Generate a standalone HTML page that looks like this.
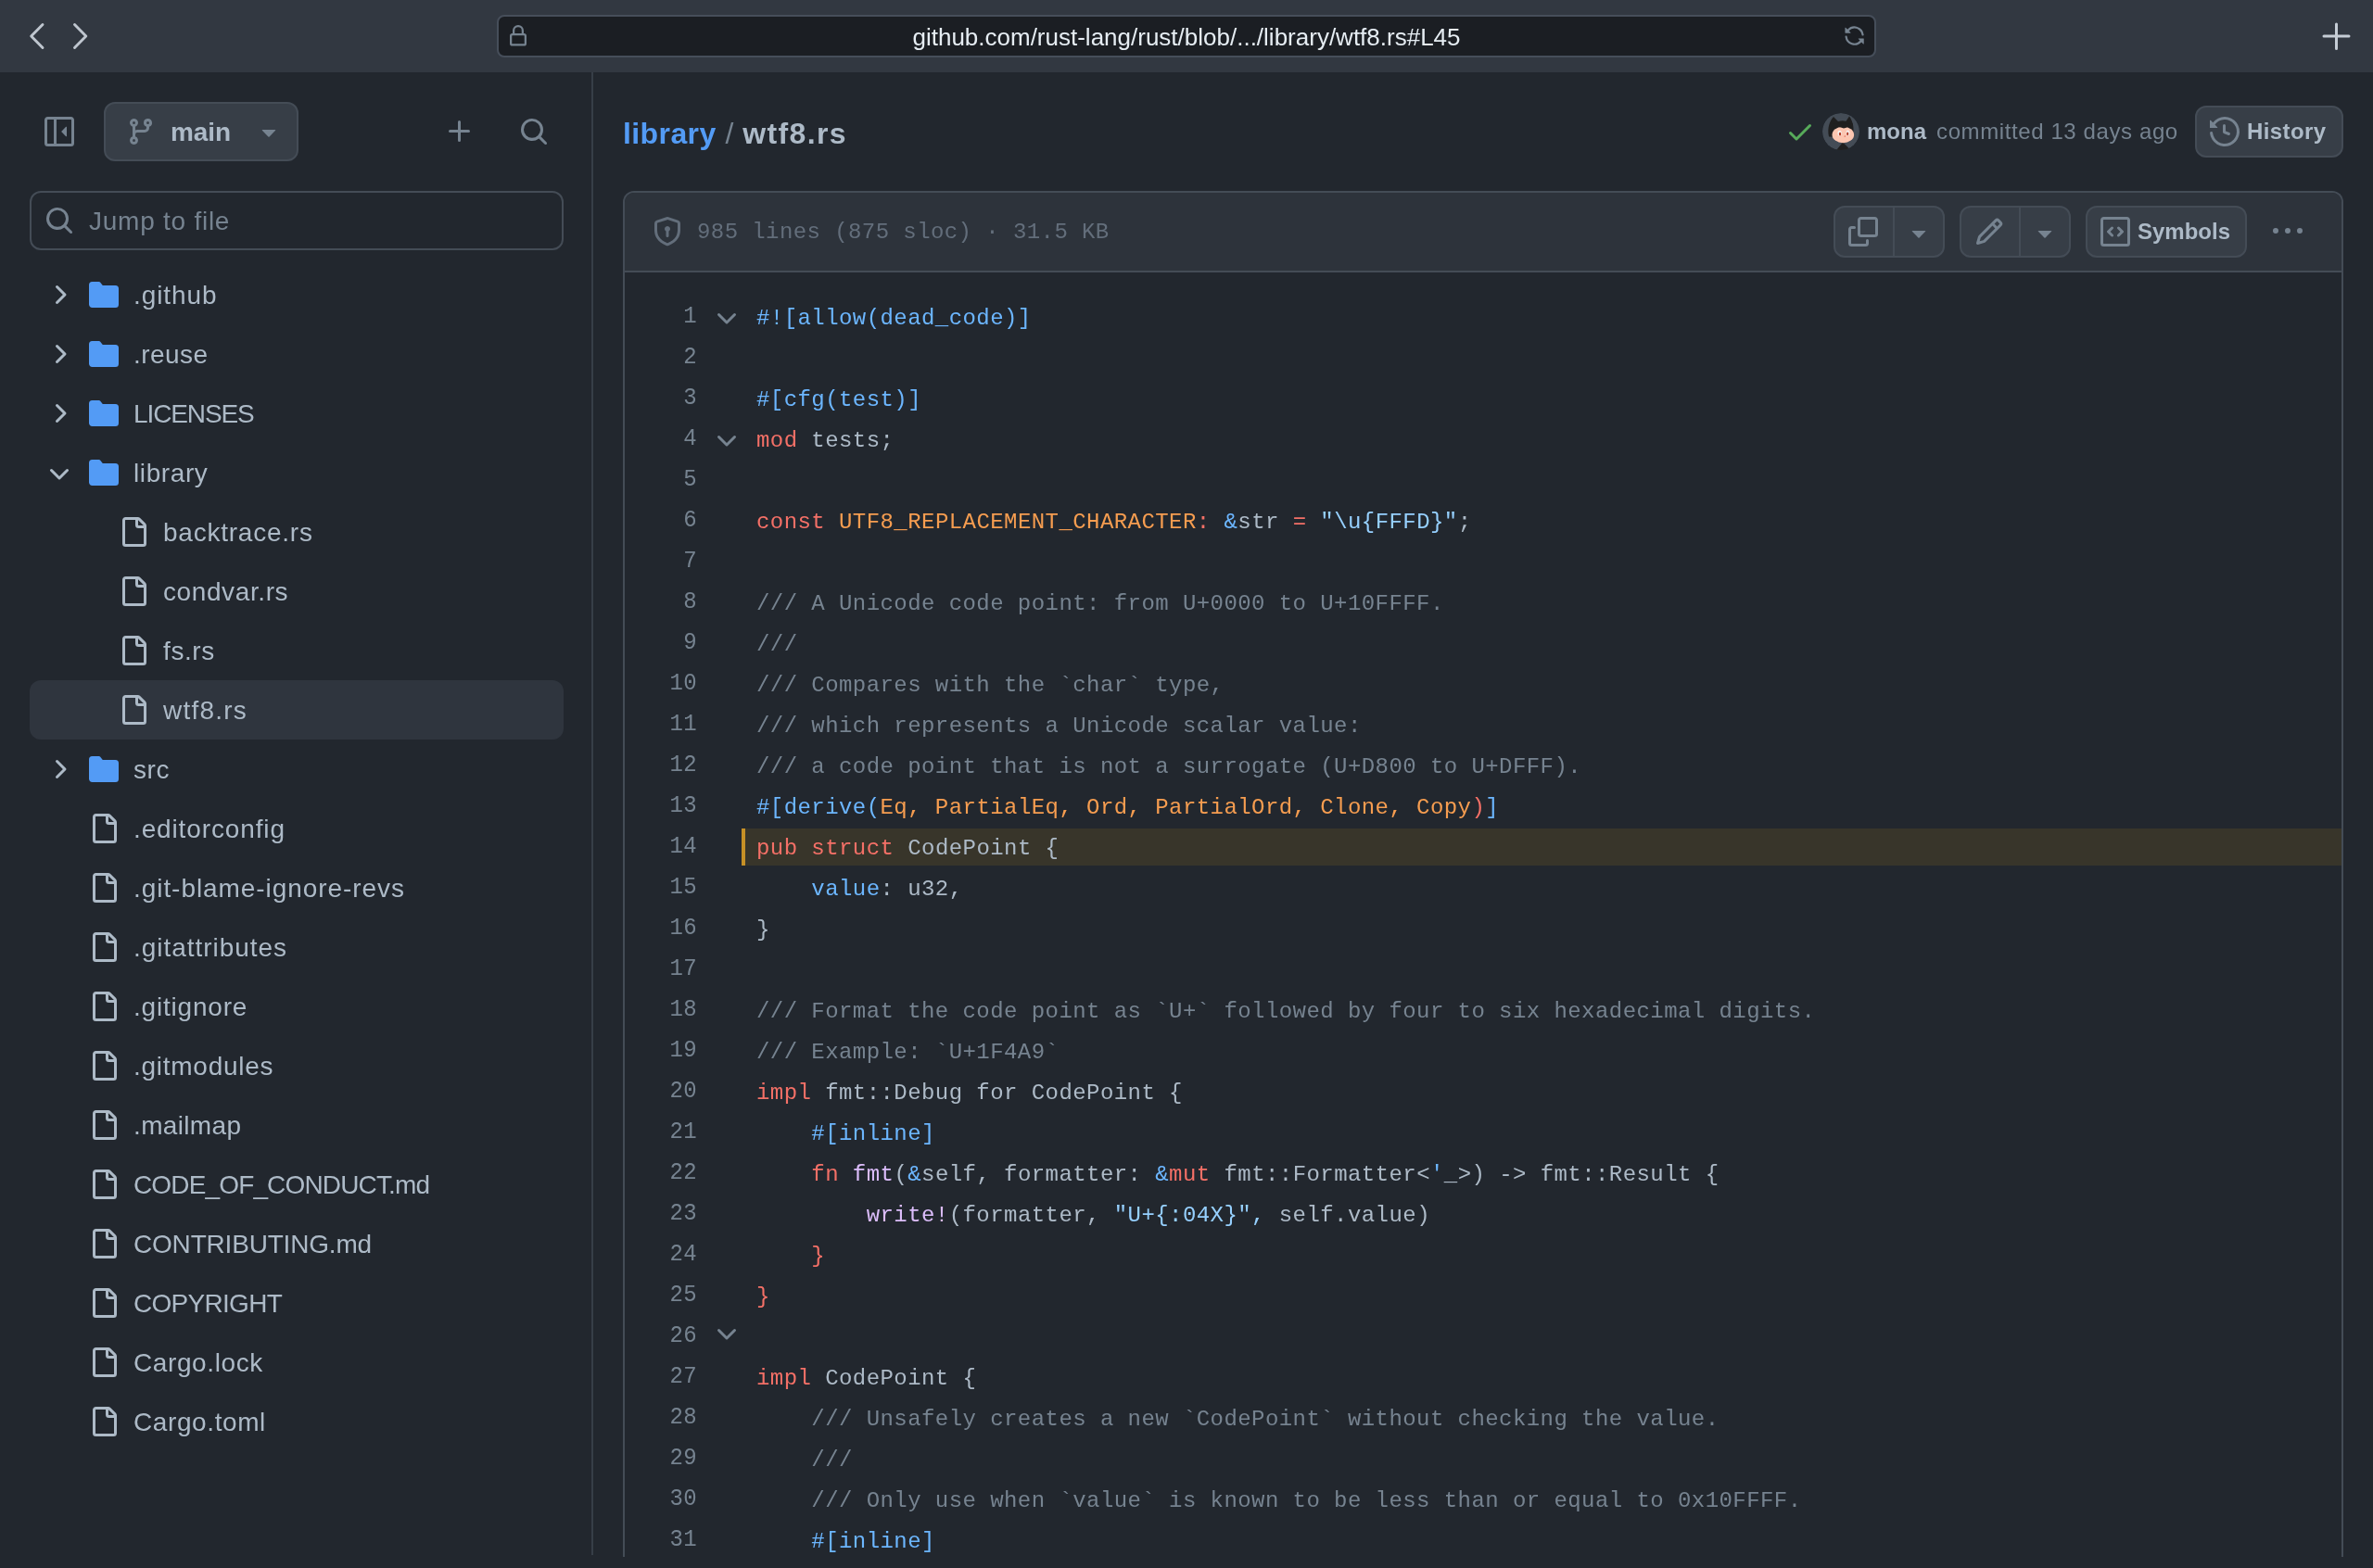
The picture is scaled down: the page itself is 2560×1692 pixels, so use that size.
<!DOCTYPE html>
<html lang="en"><head><meta charset="utf-8"><title>rust/library/wtf8.rs at main · rust-lang/rust</title>
<style>
*{box-sizing:border-box}
html,body{margin:0;padding:0}
body{width:2560px;height:1692px;overflow:hidden;background:#22272e;color:#adbac7;
 font-family:"Liberation Sans",Arial,sans-serif;position:relative}
.ic{position:absolute;display:block;overflow:visible}
.abs{position:absolute;white-space:pre}
#chrome{position:absolute;left:0;top:0;width:2560px;height:78px;background:#323841}
#url{position:absolute;left:536px;top:16px;width:1488px;height:46px;background:#1b1e23;border:2px solid #464e5a;border-radius:8px}
#urltext{left:536px;top:17.3px;width:1488px;height:46px;line-height:46px;text-align:center;font-size:26px;color:#e6edf3}
#sidediv{position:absolute;left:638px;top:78px;width:2px;height:1600px;background:#373e47}
.btn{position:absolute;background:#373e47;border:2px solid #444c56;border-radius:12px}
.t28{font-size:28px;line-height:64px;height:64px;margin-top:1px}
.row{position:absolute;left:32px;width:576px;height:64px}
#sel{position:absolute;left:32px;top:734px;width:576px;height:64px;border-radius:12px;background:#2f353e}
#jump{position:absolute;left:32px;top:206px;width:576px;height:64px;border:2px solid #444c56;border-radius:12px;background:#22272e}
#box{position:absolute;left:672px;top:206px;width:1856px;height:1474px;border:2px solid #444c56;border-bottom:0;border-radius:12px 12px 0 0;overflow:hidden;background:#22272e}
#boxhead{position:absolute;left:0;top:0;width:1852px;height:86px;background:#2d333b;border-bottom:2px solid #444c56}
.mono{font-family:"Liberation Mono","DejaVu Sans Mono",monospace}
.ln{position:absolute;left:660px;margin-top:-.4px;transform:scaleY(1.055);width:92px;text-align:right;color:#768390;font-size:24px;height:44px;line-height:44px;letter-spacing:.4px;white-space:pre}
.cl{position:absolute;left:816px;color:#adbac7;font-size:24px;height:44px;line-height:44px;letter-spacing:.433px;white-space:pre;margin-top:2px}
.k{color:#f47067}.c{color:#6cb6ff}.s{color:#96d0ff}.m{color:#768390}.e{color:#dcbdfb}.v{color:#f69d50}
#hl{position:absolute;left:800px;top:894px;width:1726px;height:40px;background:#38352a;border-left:4px solid #c69026}
#wrap{position:absolute;left:0;top:0;width:2560px;height:1692px;will-change:transform}
</style></head><body><div id="wrap">

<div id="chrome"></div>
<div id="url"></div>
<div id="urltext" class="abs">github.com/rust-lang/rust/blob/.../library/wtf8.rs#L45</div>
<svg class="ic" style="left:24px;top:19px" width="80" height="40" viewBox="0 0 80 40" fill="none" stroke="#bfc6cf" stroke-width="2.9" stroke-linecap="round" stroke-linejoin="round"><path d="M22 7.5 L9.7 20 L22 32.5"/><path d="M56.5 7.5 L68.8 20 L56.5 32.5"/></svg>
<svg class="ic" style="left:547.2px;top:27px" width="24" height="24" viewBox="0 0 16 16" fill="#768390" ><path d="M4 4a4 4 0 0 1 8 0v2h.25c.966 0 1.75.784 1.75 1.75v5.5A1.75 1.75 0 0 1 12.25 15h-8.5A1.75 1.75 0 0 1 2 13.25v-5.5C2 6.784 2.784 6 3.75 6H4Zm8.25 3.5h-8.5a.25.25 0 0 0-.25.25v5.5c0 .138.112.25.25.25h8.5a.25.25 0 0 0 .25-.25v-5.5a.25.25 0 0 0-.25-.25ZM10.5 6V4a2.5 2.5 0 1 0-5 0v2Z"/></svg>
<svg class="ic" style="left:1989.3px;top:27.4px" width="23.2" height="23.2" viewBox="0 0 16 16" fill="#768390" ><path d="M1.705 8.005a.75.75 0 0 1 .834.656 5.5 5.5 0 0 0 9.592 2.97l-1.204-1.204a.25.25 0 0 1 .177-.427h3.646a.25.25 0 0 1 .25.25v3.646a.25.25 0 0 1-.427.177l-1.38-1.38A7.002 7.002 0 0 1 1.05 8.84a.75.75 0 0 1 .656-.834ZM8 2.5a5.487 5.487 0 0 0-4.131 1.869l1.204 1.204A.25.25 0 0 1 4.896 6H1.25A.25.25 0 0 1 1 5.75V2.104a.25.25 0 0 1 .427-.177l1.38 1.38A7.002 7.002 0 0 1 14.95 7.16a.75.75 0 0 1-1.49.178A5.5 5.5 0 0 0 8 2.5Z"/></svg>
<svg class="ic" style="left:2504px;top:23px" width="32" height="32" viewBox="0 0 32 32" fill="none" stroke="#c5ccd5" stroke-width="3" stroke-linecap="round"><path d="M16.5 3V29.5M3 16H30"/></svg>
<div id="sidediv"></div>
<svg class="ic" style="left:48px;top:126px" width="32" height="32" viewBox="0 0 16 16" fill="#768390"><path d="M9.177 7.823a.25.25 0 0 0 0 .354l2.396 2.396A.25.25 0 0 0 12 10.396V5.604a.25.25 0 0 0-.427-.177Z"/><path d="M1.75 0h12.5C15.216 0 16 .784 16 1.75v12.5A1.75 1.75 0 0 1 14.25 16H1.75A1.75 1.75 0 0 1 0 14.25V1.75C0 .784.784 0 1.75 0ZM1.5 1.75v12.5c0 .138.112.25.25.25H5v-13H1.75a.25.25 0 0 0-.25.25ZM6.5 14.5h7.75a.25.25 0 0 0 .25-.25V1.75a.25.25 0 0 0-.25-.25H6.5Z"/></svg>
<div class="btn" style="left:112px;top:110px;width:210px;height:64px"></div>
<svg class="ic" style="left:136px;top:126px" width="32" height="32" viewBox="0 0 16 16" fill="#768390" ><path d="M9.5 3.25a2.25 2.25 0 1 1 3 2.122V6A2.5 2.5 0 0 1 10 8.5H6a1 1 0 0 0-1 1v1.128a2.251 2.251 0 1 1-1.5 0V5.372a2.25 2.25 0 1 1 1.5 0v1.836A2.493 2.493 0 0 1 6 7h4a1 1 0 0 0 1-1v-.628A2.25 2.25 0 0 1 9.5 3.25Zm-6 0a.75.75 0 1 0 1.5 0 .75.75 0 0 0-1.5 0Zm8.25-.75a.75.75 0 1 0 0 1.5.75.75 0 0 0 0-1.5ZM4.25 12a.75.75 0 1 0 0 1.5.75.75 0 0 0 0-1.5Z"/></svg>
<div class="abs" style="left:184px;top:111px;height:64px;line-height:64px;font-size:28px;font-weight:700;color:#adbac7;letter-spacing:-.1px">main</div>
<svg class="ic" style="left:274px;top:126px" width="32" height="32" viewBox="0 0 16 16" fill="#768390" ><path d="m4.427 7.427 3.396 3.396a.25.25 0 0 0 .354 0l3.396-3.396A.25.25 0 0 0 11.396 7H4.604a.25.25 0 0 0-.177.427Z"/></svg>
<svg class="ic" style="left:480px;top:126px" width="32" height="32" viewBox="0 0 16 16" fill="#768390" ><path d="M7.75 2a.75.75 0 0 1 .75.75V7h4.25a.75.75 0 0 1 0 1.5H8.5v4.25a.75.75 0 0 1-1.5 0V8.5H2.75a.75.75 0 0 1 0-1.5H7V2.75A.75.75 0 0 1 7.75 2Z"/></svg>
<svg class="ic" style="left:560px;top:126px" width="32" height="32" viewBox="0 0 16 16" fill="#768390" ><path d="M10.68 11.74a6 6 0 0 1-7.922-8.982 6 6 0 0 1 8.982 7.922l3.04 3.04a.749.749 0 0 1-.326 1.275.749.749 0 0 1-.734-.215ZM11.5 7a4.499 4.499 0 1 0-8.997 0A4.499 4.499 0 0 0 11.5 7Z"/></svg>
<div id="jump"></div>
<svg class="ic" style="left:48px;top:222px" width="32" height="32" viewBox="0 0 16 16" fill="#768390" ><path d="M10.68 11.74a6 6 0 0 1-7.922-8.982 6 6 0 0 1 8.982 7.922l3.04 3.04a.749.749 0 0 1-.326 1.275.749.749 0 0 1-.734-.215ZM11.5 7a4.499 4.499 0 1 0-8.997 0A4.499 4.499 0 0 0 11.5 7Z"/></svg>
<div class="abs t28" style="left:96px;top:206px;color:#768390;letter-spacing:.75px">Jump to file</div>
<div id="sel"></div>
<svg class="ic" style="left:48px;top:302px" width="32" height="32" viewBox="0 0 16 16" fill="#adbac7" ><path d="M6.22 3.22a.75.75 0 0 1 1.06 0l4.25 4.25a.75.75 0 0 1 0 1.06l-4.25 4.25a.751.751 0 0 1-1.042-.018.751.751 0 0 1-.018-1.042L9.94 8 6.22 4.28a.75.75 0 0 1 0-1.06Z"/></svg>
<svg class="ic" style="left:96px;top:302px" width="32" height="32" viewBox="0 0 16 16" fill="#539bf5" ><path d="M1.75 1A1.75 1.75 0 0 0 0 2.75v10.5C0 14.216.784 15 1.75 15h12.5A1.75 1.75 0 0 0 16 13.25v-8.5A1.75 1.75 0 0 0 14.25 3H7.5a.25.25 0 0 1-.2-.1l-.9-1.2C6.07 1.26 5.55 1 5 1H1.75Z"/></svg>
<div class="abs t28" style="left:144px;top:286px;letter-spacing:0.9px">.github</div>
<svg class="ic" style="left:48px;top:366px" width="32" height="32" viewBox="0 0 16 16" fill="#adbac7" ><path d="M6.22 3.22a.75.75 0 0 1 1.06 0l4.25 4.25a.75.75 0 0 1 0 1.06l-4.25 4.25a.751.751 0 0 1-1.042-.018.751.751 0 0 1-.018-1.042L9.94 8 6.22 4.28a.75.75 0 0 1 0-1.06Z"/></svg>
<svg class="ic" style="left:96px;top:366px" width="32" height="32" viewBox="0 0 16 16" fill="#539bf5" ><path d="M1.75 1A1.75 1.75 0 0 0 0 2.75v10.5C0 14.216.784 15 1.75 15h12.5A1.75 1.75 0 0 0 16 13.25v-8.5A1.75 1.75 0 0 0 14.25 3H7.5a.25.25 0 0 1-.2-.1l-.9-1.2C6.07 1.26 5.55 1 5 1H1.75Z"/></svg>
<div class="abs t28" style="left:144px;top:350px;letter-spacing:0.45px">.reuse</div>
<svg class="ic" style="left:48px;top:430px" width="32" height="32" viewBox="0 0 16 16" fill="#adbac7" ><path d="M6.22 3.22a.75.75 0 0 1 1.06 0l4.25 4.25a.75.75 0 0 1 0 1.06l-4.25 4.25a.751.751 0 0 1-1.042-.018.751.751 0 0 1-.018-1.042L9.94 8 6.22 4.28a.75.75 0 0 1 0-1.06Z"/></svg>
<svg class="ic" style="left:96px;top:430px" width="32" height="32" viewBox="0 0 16 16" fill="#539bf5" ><path d="M1.75 1A1.75 1.75 0 0 0 0 2.75v10.5C0 14.216.784 15 1.75 15h12.5A1.75 1.75 0 0 0 16 13.25v-8.5A1.75 1.75 0 0 0 14.25 3H7.5a.25.25 0 0 1-.2-.1l-.9-1.2C6.07 1.26 5.55 1 5 1H1.75Z"/></svg>
<div class="abs t28" style="left:144px;top:414px;letter-spacing:-1.1px">LICENSES</div>
<svg class="ic" style="left:48px;top:496px" width="32" height="32" viewBox="0 0 16 16" fill="#adbac7" ><path d="M12.78 5.22a.749.749 0 0 1 0 1.06l-4.25 4.25a.749.749 0 0 1-1.06 0L3.22 6.28a.749.749 0 1 1 1.06-1.06L8 8.939l3.72-3.719a.749.749 0 0 1 1.06 0Z"/></svg>
<svg class="ic" style="left:96px;top:494px" width="32" height="32" viewBox="0 0 16 16" fill="#539bf5" ><path d="M1.75 1A1.75 1.75 0 0 0 0 2.75v10.5C0 14.216.784 15 1.75 15h12.5A1.75 1.75 0 0 0 16 13.25v-8.5A1.75 1.75 0 0 0 14.25 3H7.5a.25.25 0 0 1-.2-.1l-.9-1.2C6.07 1.26 5.55 1 5 1H1.75Z"/></svg>
<div class="abs t28" style="left:144px;top:478px;letter-spacing:0.6px">library</div>
<svg class="ic" style="left:128px;top:558px" width="32" height="32" viewBox="0 0 16 16" fill="#adbac7" ><path d="M2 1.75C2 .784 2.784 0 3.75 0h6.586c.464 0 .909.184 1.237.513l2.914 2.914c.329.328.513.773.513 1.237v9.586A1.75 1.75 0 0 1 13.25 16h-9.5A1.75 1.75 0 0 1 2 14.25Zm1.75-.25a.25.25 0 0 0-.25.25v12.5c0 .138.112.25.25.25h9.5a.25.25 0 0 0 .25-.25V6h-2.75A1.75 1.75 0 0 1 9 4.25V1.5Zm6.75.062V4.25c0 .138.112.25.25.25h2.688l-.011-.013-2.914-2.914-.013-.011Z"/></svg>
<div class="abs t28" style="left:176px;top:542px;letter-spacing:0.77px">backtrace.rs</div>
<svg class="ic" style="left:128px;top:622px" width="32" height="32" viewBox="0 0 16 16" fill="#adbac7" ><path d="M2 1.75C2 .784 2.784 0 3.75 0h6.586c.464 0 .909.184 1.237.513l2.914 2.914c.329.328.513.773.513 1.237v9.586A1.75 1.75 0 0 1 13.25 16h-9.5A1.75 1.75 0 0 1 2 14.25Zm1.75-.25a.25.25 0 0 0-.25.25v12.5c0 .138.112.25.25.25h9.5a.25.25 0 0 0 .25-.25V6h-2.75A1.75 1.75 0 0 1 9 4.25V1.5Zm6.75.062V4.25c0 .138.112.25.25.25h2.688l-.011-.013-2.914-2.914-.013-.011Z"/></svg>
<div class="abs t28" style="left:176px;top:606px;letter-spacing:0.6px">condvar.rs</div>
<svg class="ic" style="left:128px;top:686px" width="32" height="32" viewBox="0 0 16 16" fill="#adbac7" ><path d="M2 1.75C2 .784 2.784 0 3.75 0h6.586c.464 0 .909.184 1.237.513l2.914 2.914c.329.328.513.773.513 1.237v9.586A1.75 1.75 0 0 1 13.25 16h-9.5A1.75 1.75 0 0 1 2 14.25Zm1.75-.25a.25.25 0 0 0-.25.25v12.5c0 .138.112.25.25.25h9.5a.25.25 0 0 0 .25-.25V6h-2.75A1.75 1.75 0 0 1 9 4.25V1.5Zm6.75.062V4.25c0 .138.112.25.25.25h2.688l-.011-.013-2.914-2.914-.013-.011Z"/></svg>
<div class="abs t28" style="left:176px;top:670px;letter-spacing:0.6px">fs.rs</div>
<svg class="ic" style="left:128px;top:750px" width="32" height="32" viewBox="0 0 16 16" fill="#adbac7" ><path d="M2 1.75C2 .784 2.784 0 3.75 0h6.586c.464 0 .909.184 1.237.513l2.914 2.914c.329.328.513.773.513 1.237v9.586A1.75 1.75 0 0 1 13.25 16h-9.5A1.75 1.75 0 0 1 2 14.25Zm1.75-.25a.25.25 0 0 0-.25.25v12.5c0 .138.112.25.25.25h9.5a.25.25 0 0 0 .25-.25V6h-2.75A1.75 1.75 0 0 1 9 4.25V1.5Zm6.75.062V4.25c0 .138.112.25.25.25h2.688l-.011-.013-2.914-2.914-.013-.011Z"/></svg>
<div class="abs t28" style="left:176px;top:734px;letter-spacing:1.2px">wtf8.rs</div>
<svg class="ic" style="left:48px;top:814px" width="32" height="32" viewBox="0 0 16 16" fill="#adbac7" ><path d="M6.22 3.22a.75.75 0 0 1 1.06 0l4.25 4.25a.75.75 0 0 1 0 1.06l-4.25 4.25a.751.751 0 0 1-1.042-.018.751.751 0 0 1-.018-1.042L9.94 8 6.22 4.28a.75.75 0 0 1 0-1.06Z"/></svg>
<svg class="ic" style="left:96px;top:814px" width="32" height="32" viewBox="0 0 16 16" fill="#539bf5" ><path d="M1.75 1A1.75 1.75 0 0 0 0 2.75v10.5C0 14.216.784 15 1.75 15h12.5A1.75 1.75 0 0 0 16 13.25v-8.5A1.75 1.75 0 0 0 14.25 3H7.5a.25.25 0 0 1-.2-.1l-.9-1.2C6.07 1.26 5.55 1 5 1H1.75Z"/></svg>
<div class="abs t28" style="left:144px;top:798px;letter-spacing:0.6px">src</div>
<svg class="ic" style="left:96px;top:878px" width="32" height="32" viewBox="0 0 16 16" fill="#adbac7" ><path d="M2 1.75C2 .784 2.784 0 3.75 0h6.586c.464 0 .909.184 1.237.513l2.914 2.914c.329.328.513.773.513 1.237v9.586A1.75 1.75 0 0 1 13.25 16h-9.5A1.75 1.75 0 0 1 2 14.25Zm1.75-.25a.25.25 0 0 0-.25.25v12.5c0 .138.112.25.25.25h9.5a.25.25 0 0 0 .25-.25V6h-2.75A1.75 1.75 0 0 1 9 4.25V1.5Zm6.75.062V4.25c0 .138.112.25.25.25h2.688l-.011-.013-2.914-2.914-.013-.011Z"/></svg>
<div class="abs t28" style="left:144px;top:862px;letter-spacing:0.87px">.editorconfig</div>
<svg class="ic" style="left:96px;top:942px" width="32" height="32" viewBox="0 0 16 16" fill="#adbac7" ><path d="M2 1.75C2 .784 2.784 0 3.75 0h6.586c.464 0 .909.184 1.237.513l2.914 2.914c.329.328.513.773.513 1.237v9.586A1.75 1.75 0 0 1 13.25 16h-9.5A1.75 1.75 0 0 1 2 14.25Zm1.75-.25a.25.25 0 0 0-.25.25v12.5c0 .138.112.25.25.25h9.5a.25.25 0 0 0 .25-.25V6h-2.75A1.75 1.75 0 0 1 9 4.25V1.5Zm6.75.062V4.25c0 .138.112.25.25.25h2.688l-.011-.013-2.914-2.914-.013-.011Z"/></svg>
<div class="abs t28" style="left:144px;top:926px;letter-spacing:0.94px">.git-blame-ignore-revs</div>
<svg class="ic" style="left:96px;top:1006px" width="32" height="32" viewBox="0 0 16 16" fill="#adbac7" ><path d="M2 1.75C2 .784 2.784 0 3.75 0h6.586c.464 0 .909.184 1.237.513l2.914 2.914c.329.328.513.773.513 1.237v9.586A1.75 1.75 0 0 1 13.25 16h-9.5A1.75 1.75 0 0 1 2 14.25Zm1.75-.25a.25.25 0 0 0-.25.25v12.5c0 .138.112.25.25.25h9.5a.25.25 0 0 0 .25-.25V6h-2.75A1.75 1.75 0 0 1 9 4.25V1.5Zm6.75.062V4.25c0 .138.112.25.25.25h2.688l-.011-.013-2.914-2.914-.013-.011Z"/></svg>
<div class="abs t28" style="left:144px;top:990px;letter-spacing:0.96px">.gitattributes</div>
<svg class="ic" style="left:96px;top:1070px" width="32" height="32" viewBox="0 0 16 16" fill="#adbac7" ><path d="M2 1.75C2 .784 2.784 0 3.75 0h6.586c.464 0 .909.184 1.237.513l2.914 2.914c.329.328.513.773.513 1.237v9.586A1.75 1.75 0 0 1 13.25 16h-9.5A1.75 1.75 0 0 1 2 14.25Zm1.75-.25a.25.25 0 0 0-.25.25v12.5c0 .138.112.25.25.25h9.5a.25.25 0 0 0 .25-.25V6h-2.75A1.75 1.75 0 0 1 9 4.25V1.5Zm6.75.062V4.25c0 .138.112.25.25.25h2.688l-.011-.013-2.914-2.914-.013-.011Z"/></svg>
<div class="abs t28" style="left:144px;top:1054px;letter-spacing:0.8px">.gitignore</div>
<svg class="ic" style="left:96px;top:1134px" width="32" height="32" viewBox="0 0 16 16" fill="#adbac7" ><path d="M2 1.75C2 .784 2.784 0 3.75 0h6.586c.464 0 .909.184 1.237.513l2.914 2.914c.329.328.513.773.513 1.237v9.586A1.75 1.75 0 0 1 13.25 16h-9.5A1.75 1.75 0 0 1 2 14.25Zm1.75-.25a.25.25 0 0 0-.25.25v12.5c0 .138.112.25.25.25h9.5a.25.25 0 0 0 .25-.25V6h-2.75A1.75 1.75 0 0 1 9 4.25V1.5Zm6.75.062V4.25c0 .138.112.25.25.25h2.688l-.011-.013-2.914-2.914-.013-.011Z"/></svg>
<div class="abs t28" style="left:144px;top:1118px;letter-spacing:0.73px">.gitmodules</div>
<svg class="ic" style="left:96px;top:1198px" width="32" height="32" viewBox="0 0 16 16" fill="#adbac7" ><path d="M2 1.75C2 .784 2.784 0 3.75 0h6.586c.464 0 .909.184 1.237.513l2.914 2.914c.329.328.513.773.513 1.237v9.586A1.75 1.75 0 0 1 13.25 16h-9.5A1.75 1.75 0 0 1 2 14.25Zm1.75-.25a.25.25 0 0 0-.25.25v12.5c0 .138.112.25.25.25h9.5a.25.25 0 0 0 .25-.25V6h-2.75A1.75 1.75 0 0 1 9 4.25V1.5Zm6.75.062V4.25c0 .138.112.25.25.25h2.688l-.011-.013-2.914-2.914-.013-.011Z"/></svg>
<div class="abs t28" style="left:144px;top:1182px;letter-spacing:0.35px">.mailmap</div>
<svg class="ic" style="left:96px;top:1262px" width="32" height="32" viewBox="0 0 16 16" fill="#adbac7" ><path d="M2 1.75C2 .784 2.784 0 3.75 0h6.586c.464 0 .909.184 1.237.513l2.914 2.914c.329.328.513.773.513 1.237v9.586A1.75 1.75 0 0 1 13.25 16h-9.5A1.75 1.75 0 0 1 2 14.25Zm1.75-.25a.25.25 0 0 0-.25.25v12.5c0 .138.112.25.25.25h9.5a.25.25 0 0 0 .25-.25V6h-2.75A1.75 1.75 0 0 1 9 4.25V1.5Zm6.75.062V4.25c0 .138.112.25.25.25h2.688l-.011-.013-2.914-2.914-.013-.011Z"/></svg>
<div class="abs t28" style="left:144px;top:1246px;letter-spacing:-0.85px">CODE_OF_CONDUCT.md</div>
<svg class="ic" style="left:96px;top:1326px" width="32" height="32" viewBox="0 0 16 16" fill="#adbac7" ><path d="M2 1.75C2 .784 2.784 0 3.75 0h6.586c.464 0 .909.184 1.237.513l2.914 2.914c.329.328.513.773.513 1.237v9.586A1.75 1.75 0 0 1 13.25 16h-9.5A1.75 1.75 0 0 1 2 14.25Zm1.75-.25a.25.25 0 0 0-.25.25v12.5c0 .138.112.25.25.25h9.5a.25.25 0 0 0 .25-.25V6h-2.75A1.75 1.75 0 0 1 9 4.25V1.5Zm6.75.062V4.25c0 .138.112.25.25.25h2.688l-.011-.013-2.914-2.914-.013-.011Z"/></svg>
<div class="abs t28" style="left:144px;top:1310px;letter-spacing:-0.19px">CONTRIBUTING.md</div>
<svg class="ic" style="left:96px;top:1390px" width="32" height="32" viewBox="0 0 16 16" fill="#adbac7" ><path d="M2 1.75C2 .784 2.784 0 3.75 0h6.586c.464 0 .909.184 1.237.513l2.914 2.914c.329.328.513.773.513 1.237v9.586A1.75 1.75 0 0 1 13.25 16h-9.5A1.75 1.75 0 0 1 2 14.25Zm1.75-.25a.25.25 0 0 0-.25.25v12.5c0 .138.112.25.25.25h9.5a.25.25 0 0 0 .25-.25V6h-2.75A1.75 1.75 0 0 1 9 4.25V1.5Zm6.75.062V4.25c0 .138.112.25.25.25h2.688l-.011-.013-2.914-2.914-.013-.011Z"/></svg>
<div class="abs t28" style="left:144px;top:1374px;letter-spacing:-0.71px">COPYRIGHT</div>
<svg class="ic" style="left:96px;top:1454px" width="32" height="32" viewBox="0 0 16 16" fill="#adbac7" ><path d="M2 1.75C2 .784 2.784 0 3.75 0h6.586c.464 0 .909.184 1.237.513l2.914 2.914c.329.328.513.773.513 1.237v9.586A1.75 1.75 0 0 1 13.25 16h-9.5A1.75 1.75 0 0 1 2 14.25Zm1.75-.25a.25.25 0 0 0-.25.25v12.5c0 .138.112.25.25.25h9.5a.25.25 0 0 0 .25-.25V6h-2.75A1.75 1.75 0 0 1 9 4.25V1.5Zm6.75.062V4.25c0 .138.112.25.25.25h2.688l-.011-.013-2.914-2.914-.013-.011Z"/></svg>
<div class="abs t28" style="left:144px;top:1438px;letter-spacing:0.6px">Cargo.lock</div>
<svg class="ic" style="left:96px;top:1518px" width="32" height="32" viewBox="0 0 16 16" fill="#adbac7" ><path d="M2 1.75C2 .784 2.784 0 3.75 0h6.586c.464 0 .909.184 1.237.513l2.914 2.914c.329.328.513.773.513 1.237v9.586A1.75 1.75 0 0 1 13.25 16h-9.5A1.75 1.75 0 0 1 2 14.25Zm1.75-.25a.25.25 0 0 0-.25.25v12.5c0 .138.112.25.25.25h9.5a.25.25 0 0 0 .25-.25V6h-2.75A1.75 1.75 0 0 1 9 4.25V1.5Zm6.75.062V4.25c0 .138.112.25.25.25h2.688l-.011-.013-2.914-2.914-.013-.011Z"/></svg>
<div class="abs t28" style="left:144px;top:1502px;letter-spacing:0.6px">Cargo.toml</div>
<div class="abs" style="left:672px;top:111.5px;height:64px;line-height:64px;font-size:32px;font-weight:700"><span style="color:#539bf5;letter-spacing:.4px">library</span><span style="color:#768390;font-weight:400;margin:0 1px"> / </span><span style="letter-spacing:1.35px">wtf8.rs</span></div>
<svg class="ic" style="left:1926px;top:126px" width="32" height="32" viewBox="0 0 16 16" fill="#57ab5a" ><path d="M13.78 4.22a.75.75 0 0 1 0 1.06l-7.25 7.25a.75.75 0 0 1-1.06 0L2.22 9.28a.751.751 0 0 1 .018-1.042.751.751 0 0 1 1.042-.018L6 10.94l6.72-6.72a.75.75 0 0 1 1.06 0Z"/></svg>
<svg class="ic" style="left:1966px;top:122px" width="40" height="40" viewBox="0 0 40 40"><defs><clipPath id="av"><circle cx="20" cy="20" r="20"/></clipPath></defs><g clip-path="url(#av)"><circle cx="20" cy="20" r="20" fill="#444c56"/><g transform="translate(0,-.6)"><path d="M7 26 C5 16 8 9 12 4.5 L17 9.5 C20 8.6 23 8.6 25.5 9.3 L29 4 C32 8 34 14 33.5 20 L33 27 Z" fill="#1f1f1f"/><path d="M22 32 L14 42 L32 42 Z" fill="#1f1f1f"/><ellipse cx="22.3" cy="24" rx="11.8" ry="8.8" fill="#fcc6b1"/><path d="M11 18 C15 13.5 20 16.5 23 17 C27 16.5 30 13 33 16 L33 12 L11 12 Z" fill="#1f1f1f"/><ellipse cx="18.6" cy="22.4" rx="2.1" ry="3" fill="#f3f0ee"/><ellipse cx="27.5" cy="22" rx="1.9" ry="3" fill="#f3f0ee"/><ellipse cx="19" cy="23.2" rx="1.1" ry="1.9" fill="#b5361f"/><ellipse cx="27.2" cy="22.9" rx="1" ry="1.9" fill="#b5361f"/><ellipse cx="24.3" cy="25.6" rx=".8" ry=".5" fill="#d9463a"/></g></g></svg>
<div class="abs" style="left:2014px;top:114px;height:56px;line-height:56px;font-size:24px"><span style="font-weight:700;color:#adbac7">mona</span><span style="color:#768390;letter-spacing:.6px;margin-left:-3.5px">  committed 13 days ago</span></div>
<div class="btn" style="left:2368px;top:114px;width:160px;height:56px"></div>
<svg class="ic" style="left:2384px;top:126px" width="32" height="32" viewBox="0 0 16 16" fill="#768390" ><path d="m.427 1.927 1.215 1.215a8.002 8.002 0 1 1-1.6 5.685.75.75 0 1 1 1.493-.154 6.5 6.5 0 1 0 1.18-4.458l1.358 1.358A.25.25 0 0 1 3.896 6H.25A.25.25 0 0 1 0 5.75V2.104a.25.25 0 0 1 .427-.177ZM7.75 4a.75.75 0 0 1 .75.75v2.992l2.028.812a.75.75 0 0 1-.557 1.392l-2.5-1A.751.751 0 0 1 7 8.25v-3.5A.75.75 0 0 1 7.75 4Z"/></svg>
<div class="abs" style="left:2424px;top:114px;height:56px;line-height:56px;font-size:24px;font-weight:700;color:#adbac7;letter-spacing:.4px">History</div>
<div id="box"><div id="boxhead"></div></div>
<svg class="ic" style="left:704px;top:234px" width="32" height="32" viewBox="0 0 16 16" fill="#636e7b" ><path d="m8.533.133 5.25 1.68A1.75 1.75 0 0 1 15 3.48V7c0 1.566-.32 3.182-1.303 4.682-.983 1.498-2.585 2.813-5.032 3.855a1.697 1.697 0 0 1-1.33 0c-2.447-1.042-4.049-2.357-5.032-3.855C1.32 10.182 1 8.566 1 7V3.48a1.75 1.75 0 0 1 1.217-1.667l5.25-1.68a1.748 1.748 0 0 1 1.066 0Zm-.61 1.429.001.001-5.25 1.68a.251.251 0 0 0-.174.237V7c0 1.36.275 2.666 1.057 3.859.784 1.194 2.121 2.342 4.366 3.298a.196.196 0 0 0 .154 0c2.245-.957 3.582-2.103 4.366-3.297C13.225 9.666 13.5 8.358 13.5 7V3.48a.25.25 0 0 0-.174-.238l-5.25-1.68a.25.25 0 0 0-.153 0ZM9.5 6.5c0 .536-.286 1.032-.75 1.3v2.45a.75.75 0 0 1-1.5 0V7.8A1.5 1.5 0 1 1 9.5 6.5Z"/></svg>
<div class="abs mono" style="left:752px;top:223px;height:56px;line-height:56px;font-size:24px;color:#636e7b;letter-spacing:.42px">985 lines (875 sloc) · 31.5 KB</div>
<div class="btn" style="left:1978px;top:222px;width:120px;height:56px"></div><div style="position:absolute;left:2042px;top:224px;width:2px;height:52px;background:#444c56"></div>
<svg class="ic" style="left:1994px;top:234px" width="32" height="32" viewBox="0 0 16 16" fill="#768390" ><path d="M0 6.75C0 5.784.784 5 1.75 5h1.5a.75.75 0 0 1 0 1.5h-1.5a.25.25 0 0 0-.25.25v7.5c0 .138.112.25.25.25h7.5a.25.25 0 0 0 .25-.25v-1.5a.75.75 0 0 1 1.5 0v1.5A1.75 1.75 0 0 1 9.25 16h-7.5A1.75 1.75 0 0 1 0 14.25ZM5 1.75C5 .784 5.784 0 6.75 0h7.5C15.216 0 16 .784 16 1.75v7.5A1.75 1.75 0 0 1 14.25 11h-7.5A1.75 1.75 0 0 1 5 9.25Zm1.75-.25a.25.25 0 0 0-.25.25v7.5c0 .138.112.25.25.25h7.5a.25.25 0 0 0 .25-.25v-7.5a.25.25 0 0 0-.25-.25Z"/></svg>
<svg class="ic" style="left:2054px;top:234.5px" width="32" height="32" viewBox="0 0 16 16" fill="#768390" ><path d="m4.427 7.427 3.396 3.396a.25.25 0 0 0 .354 0l3.396-3.396A.25.25 0 0 0 11.396 7H4.604a.25.25 0 0 0-.177.427Z"/></svg>
<div class="btn" style="left:2114px;top:222px;width:120px;height:56px"></div><div style="position:absolute;left:2178px;top:224px;width:2px;height:52px;background:#444c56"></div>
<svg class="ic" style="left:2130px;top:234px" width="32" height="32" viewBox="0 0 16 16" fill="#768390" ><path d="M11.013 1.427a1.75 1.75 0 0 1 2.474 0l1.086 1.086a1.75 1.75 0 0 1 0 2.474l-8.61 8.61c-.21.21-.47.364-.756.445l-3.251.93a.75.75 0 0 1-.927-.928l.929-3.25c.081-.286.235-.547.445-.758l8.61-8.61Zm.176 4.823L9.75 4.81l-6.286 6.287a.253.253 0 0 0-.064.108l-.558 1.953 1.953-.558a.253.253 0 0 0 .108-.064Zm1.238-3.763a.25.25 0 0 0-.354 0L10.811 3.75l1.439 1.44 1.263-1.263a.25.25 0 0 0 0-.354Z"/></svg>
<svg class="ic" style="left:2190px;top:234.5px" width="32" height="32" viewBox="0 0 16 16" fill="#768390" ><path d="m4.427 7.427 3.396 3.396a.25.25 0 0 0 .354 0l3.396-3.396A.25.25 0 0 0 11.396 7H4.604a.25.25 0 0 0-.177.427Z"/></svg>
<div class="btn" style="left:2250px;top:222px;width:174px;height:56px"></div>
<svg class="ic" style="left:2266px;top:234px" width="32" height="32" viewBox="0 0 16 16" fill="#768390" ><path d="M0 1.75C0 .784.784 0 1.75 0h12.5C15.216 0 16 .784 16 1.75v12.5A1.75 1.75 0 0 1 14.25 16H1.75A1.75 1.75 0 0 1 0 14.25Zm1.75-.25a.25.25 0 0 0-.25.25v12.5c0 .138.112.25.25.25h12.5a.25.25 0 0 0 .25-.25V1.75a.25.25 0 0 0-.25-.25Zm7.47 3.97a.75.75 0 0 1 1.06 0l2 2a.75.75 0 0 1 0 1.06l-2 2a.749.749 0 0 1-1.275-.326.749.749 0 0 1 .215-.734L10.69 8 9.22 6.53a.75.75 0 0 1 0-1.06ZM6.78 6.53 5.31 8l1.47 1.47a.749.749 0 0 1-.326 1.275.749.749 0 0 1-.734-.215l-2-2a.75.75 0 0 1 0-1.06l2-2a.751.751 0 0 1 1.042.018.751.751 0 0 1 .018 1.042Z"/></svg>
<div class="abs" style="left:2306px;top:222px;height:56px;line-height:56px;font-size:24px;font-weight:700;color:#adbac7">Symbols</div>
<svg class="ic" style="left:2452px;top:234px" width="32" height="32" viewBox="0 0 16 16" fill="#768390" ><path d="M8 9a1.5 1.5 0 1 0 0-3 1.5 1.5 0 0 0 0 3ZM1.5 9a1.5 1.5 0 1 0 0-3 1.5 1.5 0 0 0 0 3Zm13 0a1.5 1.5 0 1 0 0-3 1.5 1.5 0 0 0 0 3Z"/></svg>
<div id="hl"></div>
<div class="ln mono" style="top:320px">1</div>
<svg class="ic" style="left:768px;top:328px" width="32" height="32" viewBox="0 0 16 16" fill="#768390" ><path d="M12.78 5.22a.749.749 0 0 1 0 1.06l-4.25 4.25a.749.749 0 0 1-1.06 0L3.22 6.28a.749.749 0 1 1 1.06-1.06L8 8.939l3.72-3.719a.749.749 0 0 1 1.06 0Z"/></svg>
<div class="cl mono" style="top:320px"><span class="c">#![allow(dead_code)]</span></div>
<div class="ln mono" style="top:364px">2</div>
<div class="ln mono" style="top:408px">3</div>
<div class="cl mono" style="top:408px"><span class="c">#[cfg(test)]</span></div>
<div class="ln mono" style="top:452px">4</div>
<svg class="ic" style="left:768px;top:460px" width="32" height="32" viewBox="0 0 16 16" fill="#768390" ><path d="M12.78 5.22a.749.749 0 0 1 0 1.06l-4.25 4.25a.749.749 0 0 1-1.06 0L3.22 6.28a.749.749 0 1 1 1.06-1.06L8 8.939l3.72-3.719a.749.749 0 0 1 1.06 0Z"/></svg>
<div class="cl mono" style="top:452px"><span class="k">mod</span> tests;</div>
<div class="ln mono" style="top:496px">5</div>
<div class="ln mono" style="top:540px">6</div>
<div class="cl mono" style="top:540px"><span class="k">const</span> <span class="v">UTF8_REPLACEMENT_CHARACTER</span><span class="k">:</span> <span class="c">&amp;</span>str <span class="k">=</span> <span class="s">&quot;\u{FFFD}&quot;</span>;</div>
<div class="ln mono" style="top:584px">7</div>
<div class="ln mono" style="top:628px">8</div>
<div class="cl mono" style="top:628px"><span class="m">/// A Unicode code point: from U+0000 to U+10FFFF.</span></div>
<div class="ln mono" style="top:672px">9</div>
<div class="cl mono" style="top:672px"><span class="m">///</span></div>
<div class="ln mono" style="top:716px">10</div>
<div class="cl mono" style="top:716px"><span class="m">/// Compares with the `char` type,</span></div>
<div class="ln mono" style="top:760px">11</div>
<div class="cl mono" style="top:760px"><span class="m">/// which represents a Unicode scalar value:</span></div>
<div class="ln mono" style="top:804px">12</div>
<div class="cl mono" style="top:804px"><span class="m">/// a code point that is not a surrogate (U+D800 to U+DFFF).</span></div>
<div class="ln mono" style="top:848px">13</div>
<div class="cl mono" style="top:848px"><span class="c">#[derive(</span><span class="v">Eq, PartialEq, Ord, PartialOrd, Clone, Copy</span><span class="k">)</span><span class="c">]</span></div>
<div class="ln mono" style="top:892px">14</div>
<div class="cl mono" style="top:892px"><span class="k">pub</span> <span class="k">struct</span> CodePoint {</div>
<div class="ln mono" style="top:936px">15</div>
<div class="cl mono" style="top:936px">    <span class="c">value</span>: u32,</div>
<div class="ln mono" style="top:980px">16</div>
<div class="cl mono" style="top:980px">}</div>
<div class="ln mono" style="top:1024px">17</div>
<div class="ln mono" style="top:1068px">18</div>
<div class="cl mono" style="top:1068px"><span class="m">/// Format the code point as `U+` followed by four to six hexadecimal digits.</span></div>
<div class="ln mono" style="top:1112px">19</div>
<div class="cl mono" style="top:1112px"><span class="m">/// Example: `U+1F4A9`</span></div>
<div class="ln mono" style="top:1156px">20</div>
<div class="cl mono" style="top:1156px"><span class="k">impl</span> fmt::Debug for CodePoint {</div>
<div class="ln mono" style="top:1200px">21</div>
<div class="cl mono" style="top:1200px">    <span class="c">#[inline]</span></div>
<div class="ln mono" style="top:1244px">22</div>
<div class="cl mono" style="top:1244px">    <span class="k">fn</span> <span class="e">fmt</span>(<span class="c">&amp;</span>self, formatter: <span class="c">&amp;</span><span class="k">mut</span> fmt::Formatter&lt;<span class="c">&#x27;</span>_&gt;) -&gt; fmt::Result {</div>
<div class="ln mono" style="top:1288px">23</div>
<div class="cl mono" style="top:1288px">        <span class="e">write!</span>(formatter, <span class="s">&quot;U+{:04X}&quot;</span><span class="s">,</span> self.value)</div>
<div class="ln mono" style="top:1332px">24</div>
<div class="cl mono" style="top:1332px">    <span class="k">}</span></div>
<div class="ln mono" style="top:1376px">25</div>
<div class="cl mono" style="top:1376px"><span class="k">}</span></div>
<div class="ln mono" style="top:1420px">26</div>
<svg class="ic" style="left:768px;top:1424px" width="32" height="32" viewBox="0 0 16 16" fill="#768390" ><path d="M12.78 5.22a.749.749 0 0 1 0 1.06l-4.25 4.25a.749.749 0 0 1-1.06 0L3.22 6.28a.749.749 0 1 1 1.06-1.06L8 8.939l3.72-3.719a.749.749 0 0 1 1.06 0Z"/></svg>
<div class="ln mono" style="top:1464px">27</div>
<div class="cl mono" style="top:1464px"><span class="k">impl</span> CodePoint {</div>
<div class="ln mono" style="top:1508px">28</div>
<div class="cl mono" style="top:1508px">    <span class="m">/// Unsafely creates a new `CodePoint` without checking the value.</span></div>
<div class="ln mono" style="top:1552px">29</div>
<div class="cl mono" style="top:1552px">    <span class="m">///</span></div>
<div class="ln mono" style="top:1596px">30</div>
<div class="cl mono" style="top:1596px">    <span class="m">/// Only use when `value` is known to be less than or equal to 0x10FFFF.</span></div>
<div class="ln mono" style="top:1640px">31</div>
<div class="cl mono" style="top:1640px">    <span class="c">#[inline]</span></div>
</div></body></html>
